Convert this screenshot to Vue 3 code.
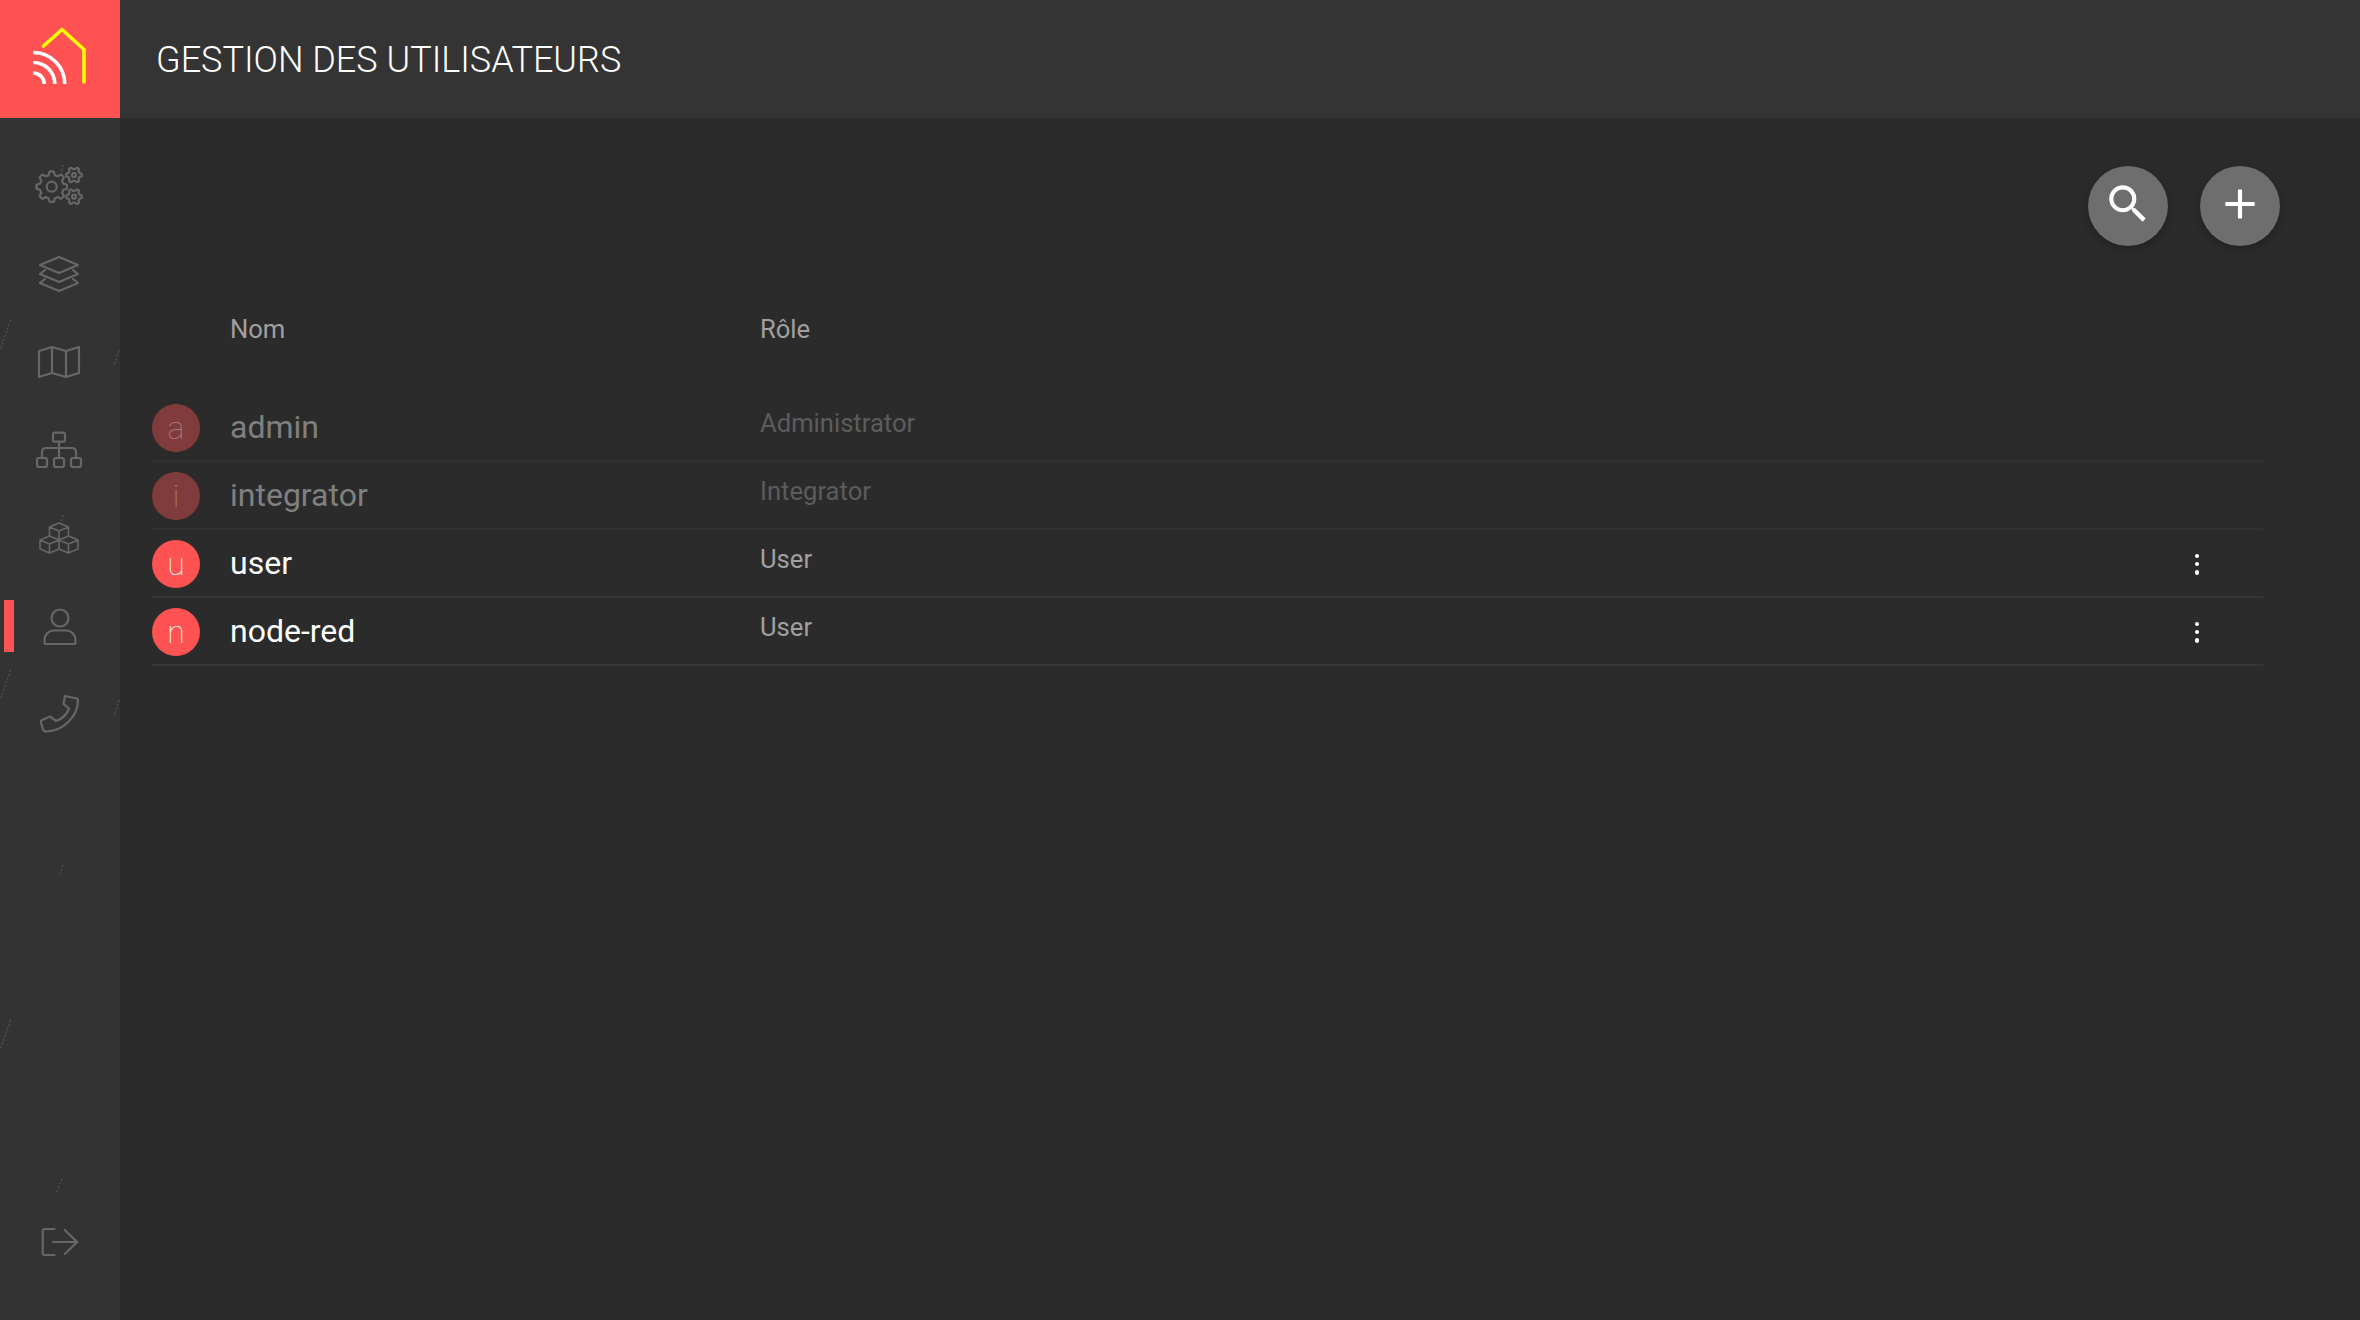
<script setup>
function gear(cx, cy, r, amp, n) {
  const pts = []
  for (let i = 0; i < 96; i++) {
    const t = (i / 96) * Math.PI * 2
    const c = Math.cos(n * t)
    const k = Math.max(-1, Math.min(1, c * 2))
    const rad = r + amp * k
    pts.push((cx + rad * Math.cos(t)).toFixed(2) + ' ' + (cy + rad * Math.sin(t)).toFixed(2))
  }
  return 'M' + pts.join('L') + 'Z'
}
const bigGear = gear(15.7, 24.7, 13.6, 1.7, 8)
const smallGearA = gear(38, 13, 6.8, 1, 6)
const smallGearB = gear(38, 34.7, 6.8, 1, 6)

const users = [
  { name: 'admin', role: 'Administrator', off: true },
  { name: 'integrator', role: 'Integrator', off: true },
  { name: 'user', role: 'User', off: false },
  { name: 'node-red', role: 'User', off: false },
]

const scratches = [
  [10.7, 320, 0, 350], [119, 350.7, 114, 366], [63, 165, 61, 173],
  [63, 515, 61, 525], [10.7, 670, 0, 700], [119, 700, 114, 716],
  [63, 865, 60, 875], [10.7, 1020, 0, 1050], [62, 1179, 56, 1194],
]
</script>

<template>
  <div class="app">
    <aside class="rail">
      <div class="logo">
        <svg width="120" height="118" viewBox="0 0 120 118" fill="none">
          <path d="M43.5 46 L62 29.5 L84 49.5 V82" stroke="#ffff00" stroke-width="3.6" stroke-linecap="round" stroke-linejoin="round" />
          <g stroke="#fff" stroke-width="3.6">
            <path d="M33.3 52.5 A31.5 31.5 0 0 1 64.8 84" />
            <path d="M33.3 62.5 A21.5 21.5 0 0 1 54.8 84" />
            <path d="M33.3 73 A11 11 0 0 1 44.3 84" />
          </g>
        </svg>
      </div>

      <svg class="scratches" width="120" height="1320" viewBox="0 0 120 1320">
        <line v-for="(s, i) in scratches" :key="i" :x1="s[0]" :y1="s[1]" :x2="s[2]" :y2="s[3]" />
      </svg>

      <nav class="nav">
        <a class="item">
          <svg class="icon" viewBox="0 0 48 48">
            <path :d="bigGear" /><circle cx="15.7" cy="24.7" r="5" />
            <path :d="smallGearA" /><circle cx="38" cy="13" r="2" />
            <path :d="smallGearB" /><circle cx="38" cy="34.7" r="2" />
          </svg>
        </a>
        <a class="item">
          <svg class="icon" viewBox="0 0 48 48">
            <path d="M23 7 L42 15 L23 23 L4 15 Z" />
            <path d="M9 20 L4 24 L23 32 L42 24 L37 20" />
            <path d="M9 29 L4 33 L23 41 L42 33 L37 29" />
          </svg>
        </a>
        <a class="item">
          <svg class="icon" viewBox="0 0 48 48">
            <path d="M3 13 L16 9 L30 13 L43 9 V35 L30 39 L16 35 L3 39 Z M16 9 V35 M30 13 V39" />
          </svg>
        </a>
        <a class="item">
          <svg class="icon" viewBox="0 0 48 48">
            <rect x="17" y="6.7" width="12" height="9" rx="2" />
            <path d="M23 16 V32 M6 32 V26 Q6 22 10 22 H36 Q40 22 40 26 V32" />
            <rect x="1" y="32" width="10" height="9" rx="2" />
            <rect x="18" y="32" width="10" height="9" rx="2" />
            <rect x="35" y="32" width="10" height="9" rx="2" />
          </svg>
        </a>
        <a class="item">
          <svg class="icon thin" viewBox="0 0 48 48">
            <path d="M13.5 13 L23 9 L32.5 13 L23 17 Z M13.5 13 V22 M32.5 13 V22 M23 17 V26" />
            <path d="M4 26 L13.5 22 L23 26 L13.5 30 Z M4 26 V35 L13.5 39 L23 35 V26 M13.5 30 V39" />
            <path d="M23 26 L32.5 22 L42 26 L32.5 30 Z M42 26 V35 L32.5 39 L23 35 M32.5 30 V39" />
          </svg>
        </a>
        <a class="item active">
          <svg class="icon" viewBox="0 0 48 48">
            <circle cx="24" cy="16" r="8.5" />
            <path d="M10 42 H38 Q39.500 42 39.500 40.500 V38 A9.500 9.500 0 0 0 30 28.500 H18 A9.500 9.500 0 0 0 8.500 38 V40.500 Q8.500 42 10 42 Z" />
          </svg>
        </a>
        <a class="item">
          <svg class="icon" viewBox="0 0 48 48">
            <path d="M29 6 L41 8.500 Q42 8.800 42 10 C42 26 28 41 10 41.500 Q7.500 41.500 7 39 L5 33 Q4.500 31 6 30 L14 26.500 L20 31 C26 29 31 24 33 18.500 L27.500 14 Z" />
          </svg>
        </a>
      </nav>

      <a class="item exit">
        <svg class="icon" viewBox="0 0 48 48">
          <path d="M18.500 11 H9 Q6.700 11 6.700 13 V35 Q6.700 37 9 37 H18.500" />
          <path d="M17 24 H41 M28.700 12 L41.200 24 L28.700 36" />
        </svg>
      </a>
    </aside>

    <div class="body">
      <header class="bar"><h1>GESTION DES UTILISATEURS</h1></header>
      <main class="main">
        <div class="actions">
          <button class="fab" aria-label="Rechercher">
            <svg width="50" height="50" viewBox="0 0 24 24" fill="#fff">
              <path d="M15.5 14h-.79l-.28-.27A6.471 6.471 0 0 0 16 9.500 6.500 6.500 0 1 0 9.500 16c1.610 0 3.090-.59 4.230-1.570l.27.28v.79l5 4.990L20.490 19l-4.990-5zm-6 0C7.010 14 5 11.990 5 9.500S7.010 5 9.500 5 14 7.010 14 9.500 11.990 14 9.500 14z" />
            </svg>
          </button>
          <button class="fab" aria-label="Ajouter">
            <svg width="50" height="50" viewBox="0 0 24 24" fill="#fff">
              <path d="M19 13h-6v6h-2v-6H5v-2h6V5h2v6h6v2z" />
            </svg>
          </button>
        </div>

        <div class="head">
          <span class="col-name">Nom</span>
          <span class="col-role">Rôle</span>
        </div>

        <div v-for="u in users" :key="u.name" class="row" :class="{ off: u.off }">
          <span class="avatar">{{ u.name[0] }}</span>
          <span class="name">{{ u.name }}</span>
          <span class="role">{{ u.role }}</span>
          <span v-if="!u.off" class="more"><i></i><i></i><i></i></span>
        </div>
      </main>
    </div>
  </div>
</template>

<style>
html, body { margin: 0; background: #2b2b2b; }
</style>

<style scoped>
.app {
  display: flex;
  width: 2360px;
  height: 1320px;
  overflow: hidden;
  background: #2b2b2b;
  color: #fff;
  font-family: Roboto, "Liberation Sans", sans-serif;
}
.rail {
  position: relative;
  display: flex;
  flex-direction: column;
  flex: 0 0 120px;
  height: 1320px;
  background: #333;
}
.logo {
  flex: 0 0 118px;
  height: 118px;
  background: #ff5252;
}
.logo svg { display: block; }
.scratches {
  position: absolute;
  top: 0;
  left: 0;
  pointer-events: none;
}
.scratches line {
  stroke: #5e5e5e;
  stroke-width: 1;
  stroke-dasharray: 2 2;
}
.nav {
  display: flex;
  flex-direction: column;
  padding-top: 24px;
}
.item {
  position: relative;
  display: flex;
  align-items: center;
  justify-content: center;
  height: 88px;
}
.item.active::before {
  content: "";
  position: absolute;
  left: 4px;
  top: 18px;
  width: 10px;
  height: 52px;
  background: #ff5252;
}
.exit {
  margin-top: auto;
  margin-bottom: 34px;
}
.icon {
  position: relative;
  display: block;
  width: 48px;
  height: 48px;
  fill: none;
  stroke: #676767;
  stroke-width: 2.2;
  stroke-linejoin: round;
  stroke-linecap: round;
  overflow: visible;
}
.icon.thin { stroke-width: 1.6; }
.body {
  display: flex;
  flex-direction: column;
  flex: 1;
  min-width: 0;
}
.bar {
  display: flex;
  align-items: center;
  flex: 0 0 118px;
  height: 118px;
  padding: 2px 0 0 36px;
  box-sizing: border-box;
  background: #343434;
}
.bar h1 {
  margin: 0;
  font-size: 36px;
  font-weight: 300;
  color: #fff;
  line-height: 1;
}
.main {
  display: flex;
  flex-direction: column;
  padding: 48px 97px 0 32px;
}
.actions {
  display: flex;
  justify-content: flex-end;
  gap: 32px;
  margin-right: -17px;
}
.fab {
  display: flex;
  align-items: center;
  justify-content: center;
  width: 80px;
  height: 80px;
  padding: 0 0 4px;
  box-sizing: border-box;
  border: 0;
  border-radius: 50%;
  background: #6e6e6e;
  box-shadow: 0 3px 8px rgba(0, 0, 0, 0.25);
}
.head {
  display: flex;
  height: 148px;
  align-items: flex-start;
  padding-top: 68px;
  box-sizing: border-box;
  font-size: 25.6px;
  line-height: 30px;
  color: #a0a0a0;
}
.col-name { margin-left: 78px; width: 530px; }
.row {
  position: relative;
  display: flex;
  align-items: center;
  height: 68px;
  box-sizing: border-box;
  padding-top: 2px;
  border-bottom: 2px solid #353535;
}
.avatar {
  display: flex;
  align-items: center;
  justify-content: center;
  flex: 0 0 48px;
  height: 48px;
  border-radius: 50%;
  background: #ff5252;
  color: #fff;
  font-size: 32px;
  font-weight: 100;
}
.name {
  width: 530px;
  margin-left: 30px;
  padding-bottom: 2px;
  font-size: 32px;
  color: #fff;
}
.role {
  position: relative;
  top: -5px;
  font-size: 25.6px;
  color: #a0a0a0;
}
.row.off .avatar { background: #803c3c; color: #a8807f; }
.row.off .name { color: #808080; }
.row.off .role { color: #5c5c5c; }
.row.off { border-bottom-color: #323232; }
.more {
  position: absolute;
  left: 2043px;
  top: 23.5px;
  display: flex;
  flex-direction: column;
  gap: 4px;
}
.more i {
  display: block;
  width: 4.400px;
  height: 4.400px;
  border-radius: 50%;
  background: #fff;
}
</style>
